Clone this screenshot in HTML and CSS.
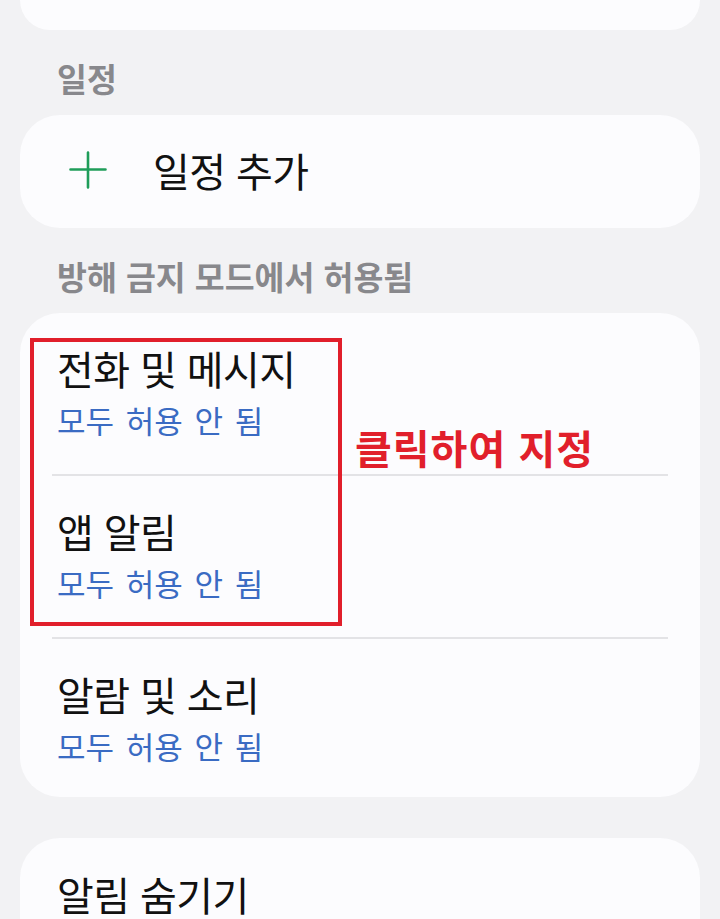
FILE: index.html
```html
<!DOCTYPE html>
<html lang="ko">
<head>
<meta charset="utf-8">
<link rel="stylesheet" href="styles.css">
</head>
<body>
<div class="screen">
  <div class="card card-top"></div>

  <div class="section-title first">일정</div>
  <div class="card card-add">
    <svg class="plus" viewBox="0 0 38 38" width="38" height="38" aria-hidden="true">
      <path d="M19 1.5V36.5M1.5 18.5H36.5" stroke="#1f9d5a" stroke-width="2.6" stroke-linecap="round" fill="none"/>
    </svg>
    <span class="add-label">일정 추가</span>
  </div>

  <div class="section-title">방해 금지 모드에서 허용됨</div>
  <div class="card card-list">
    <div class="row">
      <div class="row-title">전화 및 메시지</div>
      <div class="row-sub">모두 허용 안 됨</div>
    </div>
    <div class="divider"></div>
    <div class="row">
      <div class="row-title">앱 알림</div>
      <div class="row-sub">모두 허용 안 됨</div>
    </div>
    <div class="divider"></div>
    <div class="row last">
      <div class="row-title">알람 및 소리</div>
      <div class="row-sub">모두 허용 안 됨</div>
    </div>
    <div class="highlight"></div>
    <div class="callout">클릭하여 지정</div>
  </div>

  <div class="card card-bottom">
    <div class="row-title">알림 숨기기</div>
  </div>
</div>
</body>
</html>
```

FILE: styles.css
```css
html, body {
  margin: 0;
  padding: 0;
}
body {
  background: #f2f2f4;
  font-family: "Noto Sans CJK KR", "Noto Sans", sans-serif;
  color: #111;
}
.screen {
  width: 720px;
  height: 919px;
  overflow: hidden;
  display: flex;
  flex-direction: column;
}
.card {
  background: #fcfcfe;
  margin: 0 20px;
  border-radius: 40px;
  flex: none;
}
.card-top {
  height: 30px;
  border-radius: 0 0 40px 40px;
}
.section-title {
  padding-left: 57px;
  font-size: 32.5px;
  line-height: 40px;
  font-weight: 700;
  color: #88888c;
  letter-spacing: 0;
  margin-top: 28px;
  margin-bottom: 17px;
}
.card-add {
  height: 113px;
  display: flex;
  align-items: center;
  padding-left: 49px;
}
.plus {
  display: block;
  margin-top: -4px;
}
.add-label {
  margin-left: 46px;
  font-size: 40px;
  line-height: 48px;
  letter-spacing: -0.6px;
  margin-top: -3px;
}
.card-list {
  position: relative;
  height: 484px;
  padding: 0 32px;
}
.row {
  height: 161px;
  box-sizing: border-box;
  padding: 31px 0 0 5px;
}
.row.last {
  height: 160px;
}
.row-title {
  font-size: 40px;
  line-height: 48px;
  letter-spacing: -0.6px;
}
.row-sub {
  margin-top: 8px;
  font-size: 31px;
  line-height: 40px;
  color: #3a6bc3;
  word-spacing: 3px;
}
.divider {
  height: 2px;
  background: #e3e3e6;
}
.highlight {
  position: absolute;
  left: 10px;
  top: 25px;
  width: 304px;
  height: 280px;
  border: 4.5px solid #e11f2b;
}
.callout {
  position: absolute;
  left: 335px;
  top: 110px;
  font-size: 40px;
  line-height: 48px;
  font-weight: 700;
  color: #e11f2b;
  letter-spacing: 1px;
}
.card-bottom {
  margin-top: 41px;
  height: 140px;
  padding: 32px 0 0 37px;
  box-sizing: border-box;
}
```
